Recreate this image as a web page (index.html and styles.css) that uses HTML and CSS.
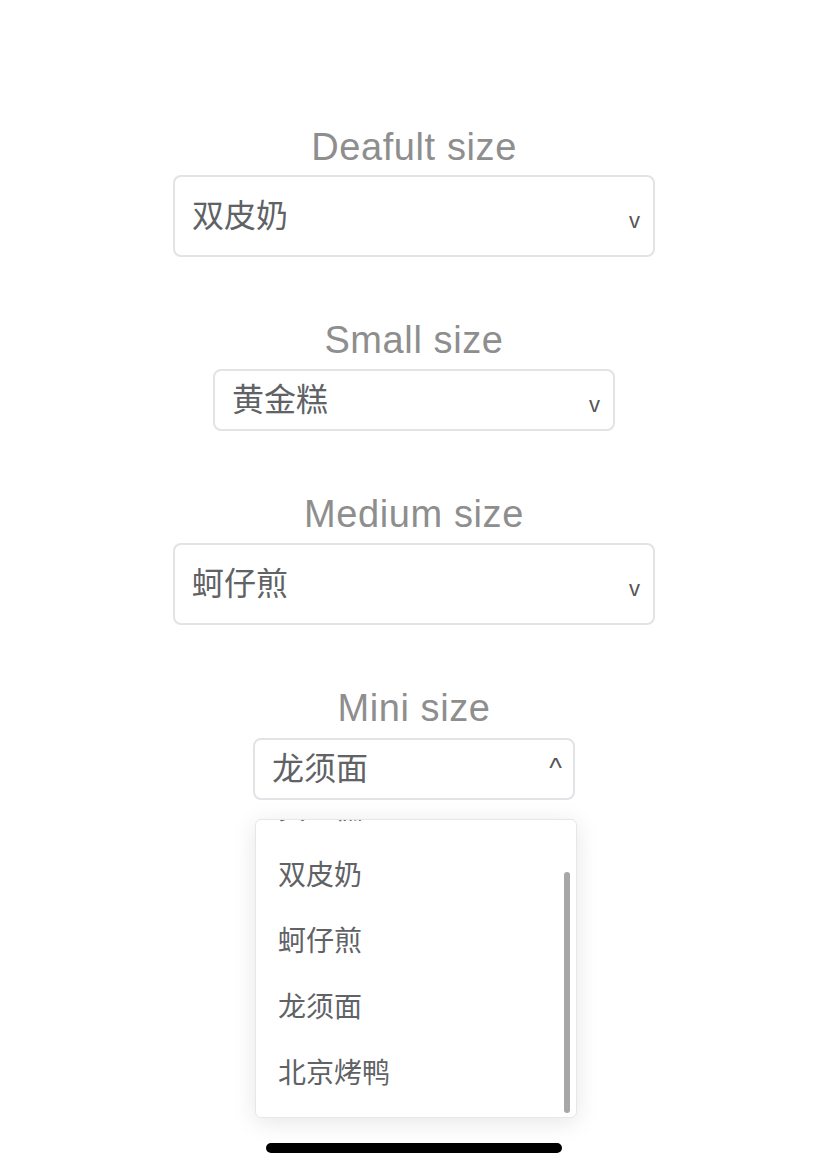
FILE: index.html
```html
<!DOCTYPE html>
<html lang="zh-CN">
<head>
  <meta charset="UTF-8">
  <title>Select sizes</title>
  <link rel="stylesheet" href="styles.css">
</head>
<body>
  <div class="page">
    <div class="field">
      <div class="label">Deafult size</div>
      <div class="select select-default">
        <span class="value">双皮奶</span>
        <span class="arrow">v</span>
      </div>
    </div>

    <div class="field">
      <div class="label">Small size</div>
      <div class="select select-small">
        <span class="value">黄金糕</span>
        <span class="arrow">v</span>
      </div>
    </div>

    <div class="field">
      <div class="label">Medium size</div>
      <div class="select select-medium">
        <span class="value">蚵仔煎</span>
        <span class="arrow">v</span>
      </div>
    </div>

    <div class="field">
      <div class="label">Mini size</div>
      <div class="select select-mini is-open">
        <span class="value">龙须面</span>
        <span class="arrow arrow-up">^</span>
      </div>

      <!-- open dropdown, scrolled to the bottom -->
      <div class="dropdown">
        <ul class="options">
          <li>黄金糕</li>
          <li>双皮奶</li>
          <li>蚵仔煎</li>
          <li>龙须面</li>
          <li>北京烤鸭</li>
        </ul>
        <div class="scrollbar"></div>
      </div>
    </div>
  </div>

  <div class="home-indicator"></div>
</body>
</html>
```

FILE: styles.css
```css
html, body {
  margin: 0;
  height: 100%;
  background: #fff;
}
body {
  font-family: "Liberation Sans", "Noto Sans CJK SC", sans-serif;
  position: relative;
  overflow: hidden;
}
.page {
  display: flex;
  flex-direction: column;
  align-items: center;
  gap: 64px;
  padding-top: 128px;
}
.field {
  display: flex;
  flex-direction: column;
  align-items: center;
  position: relative;
}
.label {
  font-size: 38px;
  line-height: 38px;
  letter-spacing: 0.6px;
  color: #8e8e8e;
  margin-bottom: 9px;
}
.select {
  box-sizing: border-box;
  display: flex;
  align-items: center;
  justify-content: space-between;
  padding: 0 13px 0 17px;
  border: 2px solid #e2e3e7;
  border-radius: 8px;
  color: #606266;
}
.select-default,
.select-medium {
  width: 482px;
  height: 82px;
}
.select-small {
  width: 402px;
  height: 62px;
  margin-top: 1px;
}
.select-medium {
  margin-top: 1px;
}
.select-mini {
  width: 322px;
  height: 62px;
  margin-top: 2px;
}
.value {
  font-size: 32px;
  line-height: 32px;
}
.arrow {
  font-size: 22px;
  line-height: 22px;
  color: #555;
  margin-top: 10px;
}
.arrow-up {
  font-size: 27px;
  margin-top: -2px;
  margin-right: -2px;
}
.dropdown {
  position: absolute;
  top: calc(100% + 19px);
  left: 2px;
  width: 322px;
  height: 299px;
  box-sizing: border-box;
  border: 1px solid #e6e7eb;
  border-radius: 6px;
  background: #fff;
  box-shadow: 0 4px 24px rgba(0, 0, 0, 0.1);
  overflow: hidden;
  z-index: 2;
}
.options {
  list-style: none;
  margin: -55px 0 0;
  padding: 12px 0;
}
.options li {
  height: 66px;
  line-height: 66px;
  padding: 0 22px;
  font-size: 28px;
  color: #606266;
}
.scrollbar {
  position: absolute;
  right: 6px;
  bottom: 4px;
  width: 6px;
  height: 241px;
  border-radius: 3px;
  background: #a7a7a7;
}
.home-indicator {
  position: absolute;
  left: 266px;
  bottom: 16px;
  width: 296px;
  height: 10px;
  border-radius: 5px;
  background: #000;
}
```
